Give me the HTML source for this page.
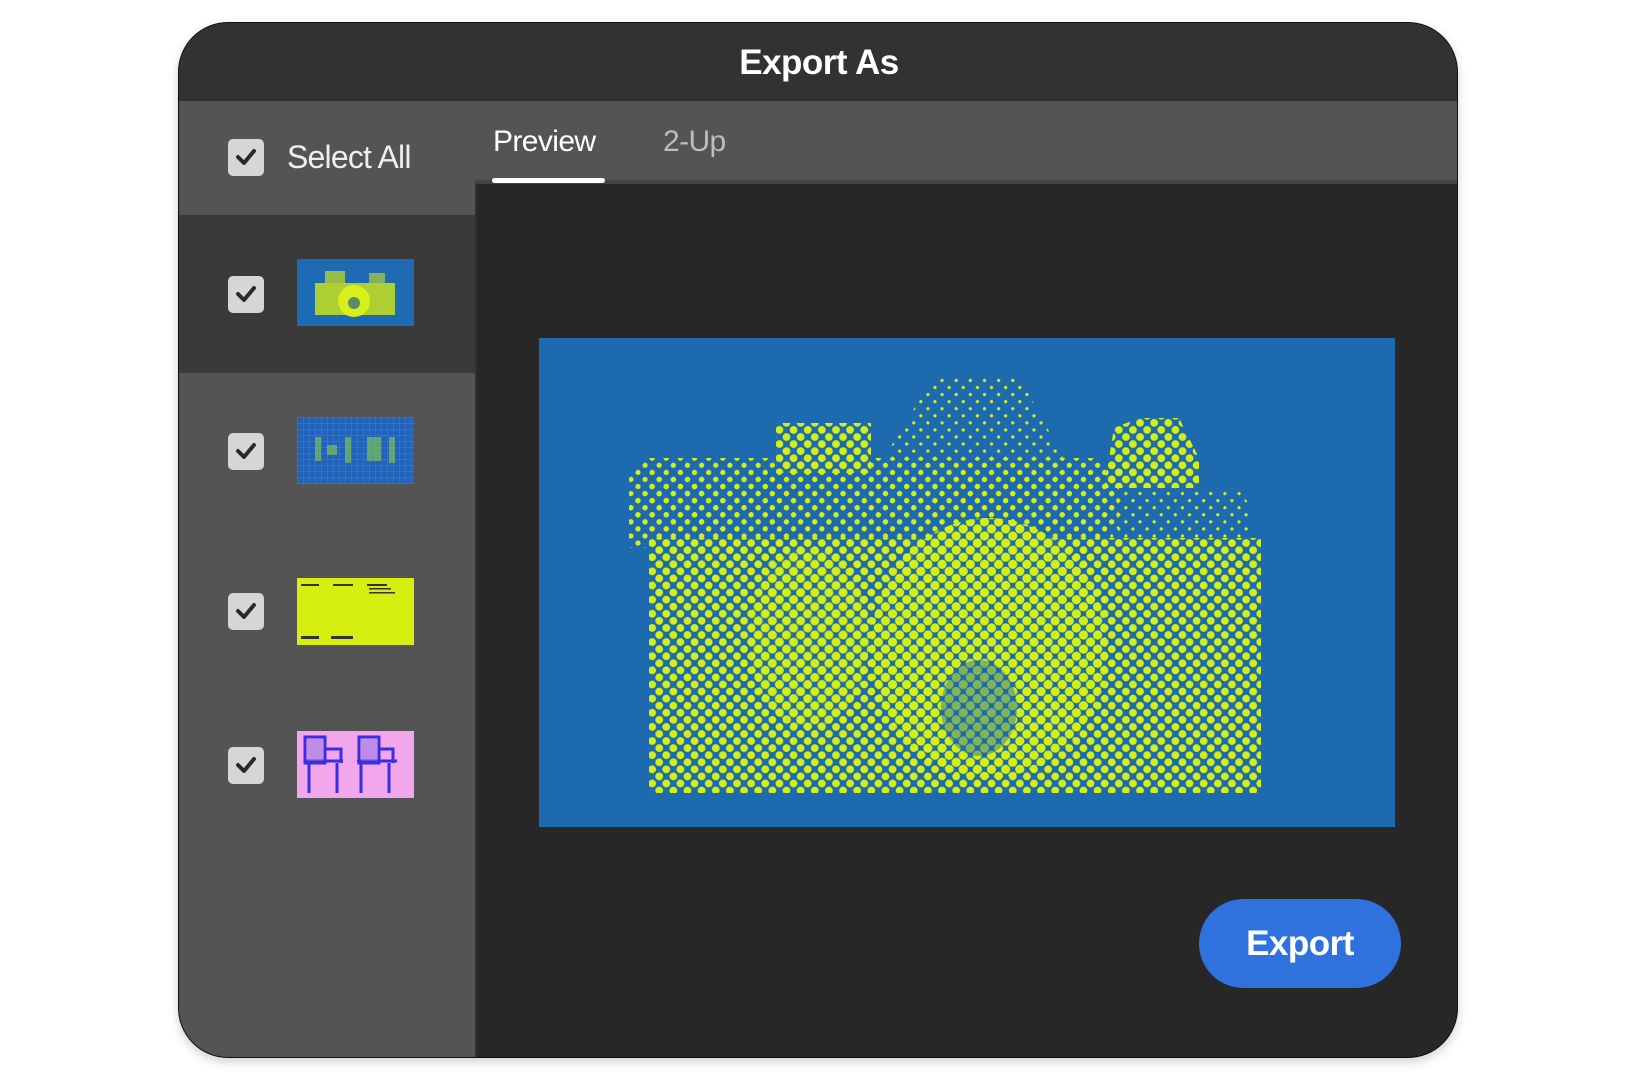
<!DOCTYPE html>
<html><head><meta charset="utf-8"><style>
*{margin:0;padding:0;box-sizing:border-box}
body{width:1634px;height:1080px;background:#fff;position:relative;overflow:hidden;font-family:"Liberation Sans",sans-serif}
.dlg{position:absolute;left:178px;top:22px;width:1280px;height:1036px;border-radius:50px;overflow:hidden;background:#272727;box-shadow:0 4px 10px rgba(0,0,0,.18);border:1px solid #111}
.abs{position:absolute}
.cb{position:absolute;left:49px;width:36px;height:37px;background:#d6d6d6;border-radius:5px}
.cb svg{position:absolute;left:7px;top:8px}
.th{position:absolute;left:118px;width:117px;height:67px}
</style></head><body>
<div class="dlg">
 <div class="abs" style="left:0;top:0;width:1280px;height:78px;background:#323232"></div>
 <div class="abs" style="left:0;top:20px;width:1280px;text-align:center;color:#fff;font-weight:bold;font-size:35px;letter-spacing:-0.5px">Export As</div>
 <div class="abs" style="left:0;top:78px;width:1280px;height:82px;background:#545454"></div>
 <div class="abs" style="left:296px;top:157px;width:984px;height:4px;background:#444"></div>
 <div class="abs" style="left:0;top:160px;width:296px;height:900px;background:#545454"></div>
 <div class="abs" style="left:0;top:192px;width:296px;height:158px;background:#3a3a3a"></div>
 <div class="abs" style="left:296px;top:160px;width:2px;height:900px;background:#303030"></div>
 <div class="cb" style="top:116px"><svg width="22" height="20" viewBox="0 0 22 20"><path d="M3 10 L9 16 L19 4" fill="none" stroke="#2a2a2a" stroke-width="4" stroke-linecap="round" stroke-linejoin="round"/></svg></div>
 <div class="abs" style="left:108px;top:116px;color:#eee;font-size:32px;letter-spacing:-0.8px">Select All</div>
 <div class="abs" style="left:314px;top:102px;color:#fff;font-size:30px;letter-spacing:-0.6px">Preview</div>
 <div class="abs" style="left:313px;top:155px;width:113px;height:5px;background:#fff;border-radius:3px"></div>
 <div class="abs" style="left:484px;top:102px;color:#bdbdbd;font-size:30px;letter-spacing:-0.6px">2-Up</div>

 <div class="cb" style="top:253px"><svg width="22" height="20" viewBox="0 0 22 20"><path d="M3 10 L9 16 L19 4" fill="none" stroke="#2a2a2a" stroke-width="4" stroke-linecap="round" stroke-linejoin="round"/></svg></div>
 <div class="cb" style="top:410px"><svg width="22" height="20" viewBox="0 0 22 20"><path d="M3 10 L9 16 L19 4" fill="none" stroke="#2a2a2a" stroke-width="4" stroke-linecap="round" stroke-linejoin="round"/></svg></div>
 <div class="cb" style="top:570px"><svg width="22" height="20" viewBox="0 0 22 20"><path d="M3 10 L9 16 L19 4" fill="none" stroke="#2a2a2a" stroke-width="4" stroke-linecap="round" stroke-linejoin="round"/></svg></div>
 <div class="cb" style="top:724px"><svg width="22" height="20" viewBox="0 0 22 20"><path d="M3 10 L9 16 L19 4" fill="none" stroke="#2a2a2a" stroke-width="4" stroke-linecap="round" stroke-linejoin="round"/></svg></div>

 <svg class="th" style="top:236px" viewBox="0 0 117 67"><rect width="117" height="67" fill="#1e6bb3"/><rect x="18" y="24" width="80" height="32" fill="#c8e01c" opacity=".85"/><rect x="28" y="12" width="20" height="12" fill="#c8e01c" opacity=".7"/><rect x="72" y="14" width="16" height="10" fill="#c8e01c" opacity=".6"/><circle cx="57" cy="42" r="16" fill="#d8f01a"/><circle cx="57" cy="44" r="6" fill="#5c8a6a"/></svg>
 <svg class="th" style="top:394px" viewBox="0 0 117 67"><defs><pattern id="g" width="6" height="6" patternUnits="userSpaceOnUse"><rect width="6" height="6" fill="#2262b8"/><path d="M0 0H6M0 0V6" stroke="#3d8a9a" stroke-width="1"/></pattern></defs><rect width="117" height="67" fill="url(#g)"/><g fill="#7bbf5a" opacity=".7"><rect x="18" y="20" width="6" height="24"/><rect x="30" y="28" width="10" height="10"/><rect x="48" y="20" width="6" height="26"/><rect x="70" y="20" width="14" height="24"/><rect x="92" y="20" width="6" height="26"/></g></svg>
 <svg class="th" style="top:555px" viewBox="0 0 117 67"><rect width="117" height="67" fill="#d6ee10"/><g fill="#333"><rect x="4" y="6" width="18" height="2"/><rect x="36" y="6" width="20" height="2"/><rect x="70" y="6" width="20" height="2"/><rect x="72" y="10" width="22" height="1.5"/><rect x="72" y="14" width="26" height="1.5"/><rect x="4" y="58" width="18" height="3"/><rect x="34" y="58" width="22" height="3"/></g></svg>
 <svg class="th" style="top:708px" viewBox="0 0 117 67"><rect width="117" height="67" fill="#f2a6ec"/><g fill="none" stroke="#3a2ee0" stroke-width="3"><path d="M8 6h20v26H8z M8 30h38 M12 32v30 M40 32v30 M28 18h16v14"/><path d="M62 6h20v26H62z M60 30h40 M64 32v30 M92 32v30 M82 18h14v14"/></g><rect x="10" y="8" width="16" height="22" fill="#8a70e0" opacity=".5"/><rect x="64" y="8" width="16" height="22" fill="#8a70e0" opacity=".5"/></svg>

 <svg class="abs" style="left:360px;top:315px" width="856" height="489" viewBox="0 0 856 489">
  <defs>
   <pattern id="d1" width="10" height="10" patternUnits="userSpaceOnUse" patternTransform="rotate(45)"><circle cx="5" cy="5" r="3.9" fill="#d4ef14"/></pattern>
   <pattern id="d0" width="10" height="10" patternUnits="userSpaceOnUse" patternTransform="rotate(45)"><circle cx="5" cy="5" r="4.6" fill="#d4ef14"/></pattern>
   <pattern id="d2" width="10" height="10" patternUnits="userSpaceOnUse" patternTransform="rotate(45)"><circle cx="5" cy="5" r="2.6" fill="#d4ef14"/></pattern>
   <pattern id="d3" width="10" height="10" patternUnits="userSpaceOnUse" patternTransform="rotate(45)"><circle cx="5" cy="5" r="1.6" fill="#d4ef14"/></pattern>
  </defs>
  <rect width="856" height="489" fill="#1d6aae"/>
  <path d="M110 207 H560 V210 L578 170 L575 135 H110 Z" fill="url(#d2)"/>
  <path d="M90 140 L110 120 H560 L580 150 V190 H90 Z" fill="url(#d2)"/>
  <path d="M395 38 H480 L530 130 V170 H345 V120 Z" fill="url(#d3)"/>
  <rect x="237" y="85" width="95" height="50" fill="url(#d1)"/>
  <path d="M575 90 L600 80 H640 L660 120 V150 H565 Z" fill="url(#d1)"/>
  <path d="M565 150 H700 L712 170 V210 H565 Z" fill="url(#d3)"/>
  <rect x="110" y="200" width="612" height="255" fill="url(#d1)"/>
  <path d="M90 170 L110 140 H200 V210 H90 Z" fill="url(#d2)"/>
  <ellipse cx="450" cy="310" rx="118" ry="130" fill="url(#d0)"/>
  <ellipse cx="270" cy="300" rx="60" ry="90" fill="url(#d0)" opacity=".8"/>
  <ellipse cx="440" cy="370" rx="38" ry="48" fill="#1d6aae" opacity=".45"/>
 </svg>

 <div class="abs" style="left:1020px;top:876px;width:202px;height:89px;border-radius:45px;background:#2f72de;color:#fff;font-weight:bold;font-size:35px;letter-spacing:-0.5px;text-align:center;line-height:89px">Export</div>
</div>
</body></html>
